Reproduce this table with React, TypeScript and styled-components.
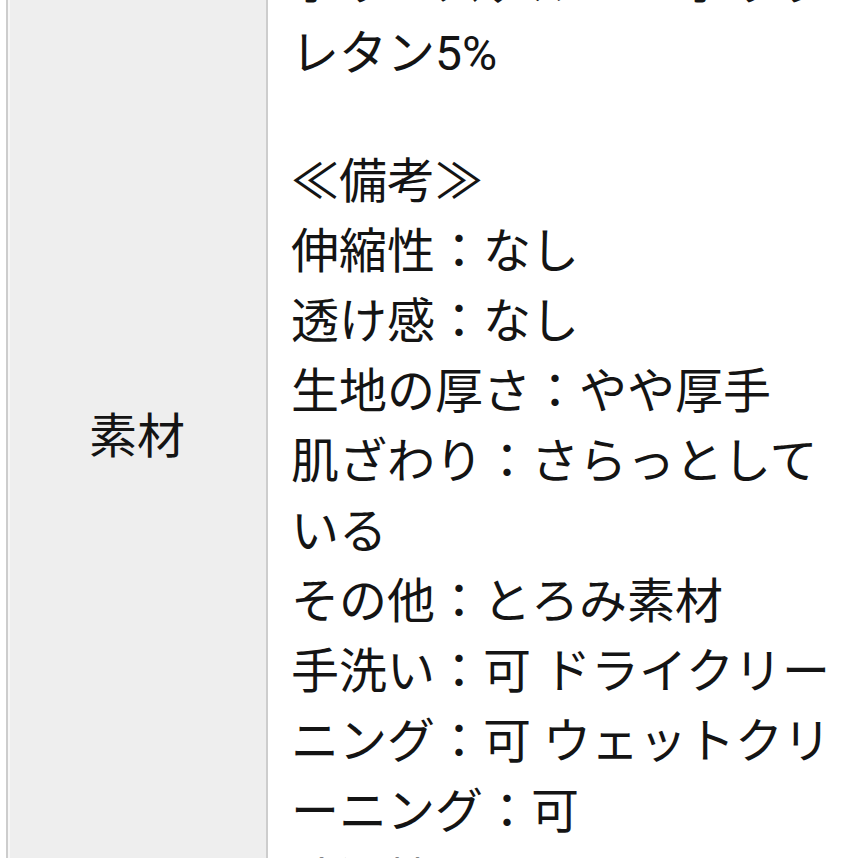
import styled, {createGlobalStyle} from 'styled-components';

const GlobalStyle = createGlobalStyle`
  html, body {
    margin: 0;
    padding: 0;
    background: #fff;
    overflow: hidden;
  }

  body {
    font-family: Roboto, "Noto Sans CJK JP", "Noto Sans", sans-serif;
    color: #141414;
  }
`;

const StyledPage = styled.div`
  padding-left: 6px;
  margin-top: -63px;
  width: 900px;
`;

const StyledTable = styled.div`
  display: flex;
  align-items: stretch;
  border-left: 2px solid #cdcdcd;
`;

const StyledHeadCell = styled.div`
  width: 258px;
  flex-shrink: 0;
  display: flex;
  justify-content: center;
  align-items: center;

  background-color: #eeeeee;
  box-shadow: inset 2px 0 0 #f8f8f8;
  border-right: 2px solid #cdcdcd;

  font-size: 48px;
  line-height: 70px;
`;

const StyledBodyCell = styled.div`
  width: 556px;
  padding: 12px 24px 20px 23px;
  font-size: 48px;
  line-height: 70px;
`;

const StyledLine = styled.div`
  word-break: normal;
  line-break: strict;
`;

const StyledGap = styled.div`
  height: 58px;
`;

const material = 'ポリエステル95% ポリウレタン5%';

const notes = [
  '≪備考≫',
  '伸縮性：なし',
  '透け感：なし',
  '生地の厚さ：やや厚手',
  '肌ざわり：さらっとしている',
  'その他：とろみ素材',
  '手洗い：可 ドライクリーニング：可 ウェットクリーニング：可',
  '洗濯機：不可',
];

function App() {
  return (
    <>
      <GlobalStyle />
      <StyledPage>
        <StyledTable>
          <StyledHeadCell>素材</StyledHeadCell>
          <StyledBodyCell>
            <StyledLine>{ material }</StyledLine>
            <StyledGap />
            { notes.map((note) => (
              <StyledLine key={ note }>{ note }</StyledLine>
            )) }
          </StyledBodyCell>
        </StyledTable>
      </StyledPage>
    </>
  );
}

export default App;
